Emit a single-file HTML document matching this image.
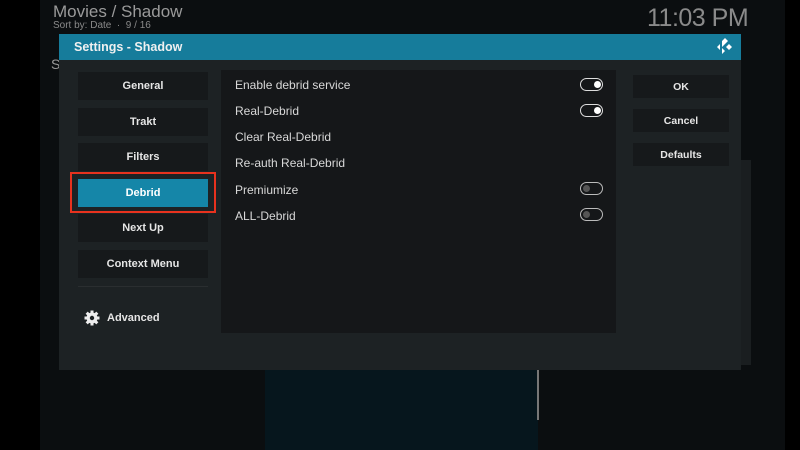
<!DOCTYPE html>
<html><head><style>
*{margin:0;padding:0;box-sizing:border-box}
body{width:800px;height:450px;overflow:hidden;background:#000;font-family:"Liberation Sans",sans-serif;position:relative}
.a{position:absolute}
.btn{position:absolute;left:78px;width:130px;height:28px;background:#16191b;color:#e6e6e6;font-size:11px;font-weight:bold;text-align:center;line-height:29px}
.rb{position:absolute;left:633px;width:96px;height:23px;background:#16191b;color:#e6e6e6;font-size:10.5px;font-weight:bold;text-align:center;line-height:24px}
.it{position:absolute;left:235px;color:#d8d8d8;font-size:12px}
.tg{position:absolute;left:580px;width:23px;height:13px;border:1.5px solid #ddd;border-radius:7px}
.tg i{position:absolute;top:1.5px;width:7px;height:7px;border-radius:50%}
</style></head><body>
<div class="a" style="left:40px;top:0;width:745px;height:450px;background:#0b0e10"></div>
<div class="a" style="left:265px;top:370px;width:273px;height:80px;background:#06161d"></div>
<div class="a" style="left:537px;top:370px;width:2px;height:50px;background:#777"></div>
<div class="a" style="left:741px;top:160px;width:10px;height:205px;background:#1a1e20"></div>
<div class="a" style="left:53px;top:2px;color:#9a9a9a;font-size:17px">Movies / Shadow</div>
<div class="a" style="left:53px;top:20px;color:#8a8a8a;font-size:10px">Sort by: Date &nbsp;·&nbsp; 9 / 16</div>
<div class="a" style="left:51px;top:56px;color:#999;font-size:14px">S</div>
<div class="a" style="left:647px;top:4px;color:#8a8a8a;font-size:25px;letter-spacing:-0.5px">11:03 PM</div>
<div class="a" style="left:59px;top:60px;width:682px;height:310px;background:#1d2224"></div>
<div class="a" style="left:59px;top:34px;width:682px;height:26px;background:#167c9b"></div>
<div class="a" style="left:74px;top:40px;color:#f0f0f0;font-size:12.5px;font-weight:bold">Settings - Shadow</div>
<svg class="a" style="left:715px;top:38px" width="20" height="19" viewBox="0 0 20 19"><path d="M2 9l3-3v6z M7 3l3-3 3 3-6 6z M11 9l3-3 3 3-3 3z M7 10l3 3-3 3z" fill="#fff"/></svg>
<div class="a" style="left:221px;top:70px;width:395px;height:263px;background:#151719"></div>
<div class="btn" style="top:72px">General</div>
<div class="btn" style="top:108px">Trakt</div>
<div class="btn" style="top:143px">Filters</div>
<div class="a" style="left:70px;top:172px;width:146px;height:41px;border:2.5px solid #e8321e"></div>
<div class="btn" style="top:179px;background:#1586a8;color:#fff">Debrid</div>
<div class="btn" style="top:214px">Next Up</div>
<div class="btn" style="top:250px">Context Menu</div>
<div class="a" style="left:78px;top:286px;width:130px;height:1px;background:#2a2e30"></div>
<svg class="a" style="left:84px;top:310px" width="16" height="16" viewBox="0 0 16 16"><g fill="#eee"><circle cx="8" cy="8" r="5.5"/><rect x="6.5" y="0.5" width="3" height="15"/><rect x="0.5" y="6.5" width="15" height="3"/><rect x="6.5" y="0.5" width="3" height="15" transform="rotate(45 8 8)"/><rect x="6.5" y="0.5" width="3" height="15" transform="rotate(-45 8 8)"/></g><circle cx="8" cy="8" r="2.2" fill="#1d2224"/></svg>
<div class="a" style="left:107px;top:312px;color:#e6e6e6;font-size:11px;font-weight:bold">Advanced</div>
<div class="it" style="top:78px">Enable debrid service</div>
<div class="it" style="top:104px">Real-Debrid</div>
<div class="it" style="top:130px">Clear Real-Debrid</div>
<div class="it" style="top:156px">Re-auth Real-Debrid</div>
<div class="it" style="top:183px">Premiumize</div>
<div class="it" style="top:209px">ALL-Debrid</div>
<div class="tg" style="top:78px"><i style="right:1.5px;background:#fff"></i></div>
<div class="tg" style="top:104px"><i style="right:1.5px;background:#fff"></i></div>
<div class="tg" style="top:182px;border-color:#bbb"><i style="left:1.5px;background:#555"></i></div>
<div class="tg" style="top:208px;border-color:#bbb"><i style="left:1.5px;background:#555"></i></div>
<div class="rb" style="top:75px">OK</div>
<div class="rb" style="top:109px">Cancel</div>
<div class="rb" style="top:143px">Defaults</div>
</body></html>
